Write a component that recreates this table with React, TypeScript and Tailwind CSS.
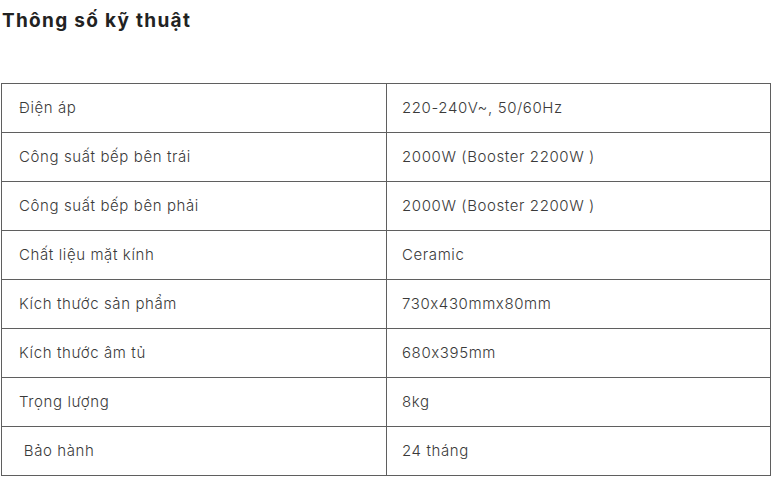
import React from "react";

const rows: [string, string][] = [
  ["Điện áp", "220-240V~, 50/60Hz"],
  ["Công suất bếp bên trái", "2000W (Booster 2200W )"],
  ["Công suất bếp bên phải", "2000W (Booster 2200W )"],
  ["Chất liệu mặt kính", "Ceramic"],
  ["Kích thước sản phẩm", "730x430mmx80mm"],
  ["Kích thước âm tủ", "680x395mm"],
  ["Trọng lượng", "8kg"],
  ["\u00a0Bảo hành", "24 tháng"],
];

export default function App() {
  return (
    <div
      className="w-[773px] h-[478px] bg-white overflow-hidden"
      style={{ fontFamily: "Inter, 'Noto Sans', sans-serif", fontFeatureSettings: "'calt' 0" }}
    >
      <h2 className="pl-[2px] pt-[9px] text-[19px] leading-[24px] font-bold tracking-[1.3px] text-[#222]">
        Thông số kỹ thuật
      </h2>
      <table className="mt-[50px] ml-[1px] w-[770px] border-collapse table-fixed text-[15px] font-light tracking-[0.6px] text-[#3a3a3a]">
        <tbody>
          {rows.map(([k, v], i) => (
            <tr key={i} className="h-[49px]">
              <td className="w-[385px] border border-[#5f5f5f] pl-[17px] align-middle">{k}</td>
              <td className="border border-[#5f5f5f] pl-[15px] align-middle">{v}</td>
            </tr>
          ))}
        </tbody>
      </table>
    </div>
  );
}
